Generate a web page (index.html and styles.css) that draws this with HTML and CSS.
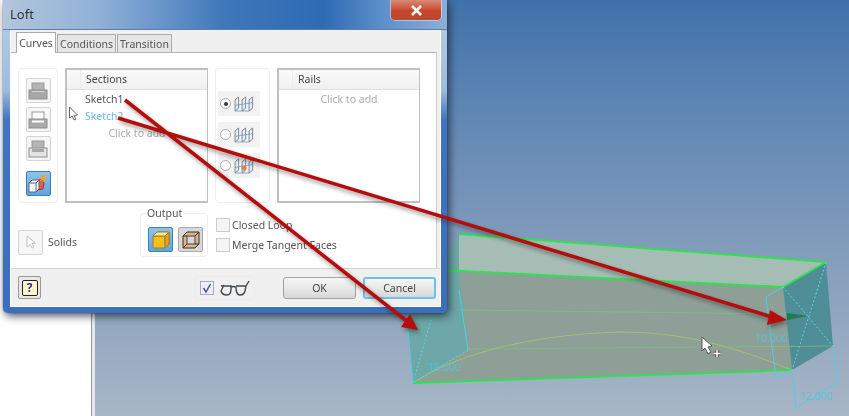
FILE: index.html
```html
<!DOCTYPE html>
<html lang="en">
<head>
    <meta charset="UTF-8">
    <title>Loft</title>
    <link rel="stylesheet" href="styles.css">
</head>
<body>
    <svg class="defs">
        <symbol id="frames" viewBox="0 0 30 24">
            <path d="M3 6 L8 2 L8 18 L3 22 Z M13 6 L18 2 L18 18 L13 22 Z M23 6 L28 2 L28 18 L23 22 Z" fill="#e8edf3" stroke="#55606e"/>
            <path d="M3 14 L28 10 M3 22 L23 22" stroke="#5b8fc8" fill="none"/>
        </symbol>
    </svg>

    <div class="scene">
        <div class="sidebar"></div>
        <div class="viewport"></div>

        <!-- the lofted solid -->
        <svg class="layer" viewBox="0 0 849 416">
            <polygon points="407,320 459,234 468,350 413,383" fill="#6ea7a8"/>
            <polygon points="459,234 826,262 783,287 459,271" fill="#a5bdb4"/>
            <polygon points="459,271 783,287 792,370 413,383 468,350" fill="#8e9f98"/>
            <polygon points="783,287 826,262 833,346 792,370" fill="#4f8e97"/>
            <path d="M460 310 L786 314 M468 349 L833 346" stroke="#7cc47c" opacity="0.7" fill="none"/>
            <path d="M413 383 C450 358 520 335 620 332 C680 332 730 345 792 370" stroke="#a5bf72" fill="none"/>
            <path d="M459 234 L826 262 M440 270 L783 287 L826 262 M413 383 L792 370" stroke="#2fe04f" stroke-width="2" fill="none"/>
            <path d="M783 287 L833 346 M826 262 L792 370 M413 383 L431 320 M468 350 L413 383" stroke="#5fd5e0" stroke-dasharray="2 2" fill="none"/>
            <path d="M407 320 L413 383 M468 350 L459 290 M766 297 L783 287 M766 297 L776 379 L792 370 M792 372 L796 408 M833 348 L838 382 M796 408 L838 382" stroke="#4fd0e0" fill="none"/>
            <polygon points="787,313 808,316 787,320" fill="#23794f"/>
            <text class="dim" x="428" y="371">18.000</text>
            <text class="dim" x="755" y="342">10.000</text>
            <text class="dim" x="800" y="400">12.000</text>
        </svg>

        <div class="dialog">
            <div class="titlebar">
                <span class="title">Loft</span>
                <div class="close">
                    <svg width="13" height="11" viewBox="0 0 13 11"><path d="M2 1 L11 10 M11 1 L2 10" stroke="#fff" stroke-width="2.6"/></svg>
                </div>
            </div>
            <div class="panel">
                <div class="tabs">
                    <div class="tab active">Curves</div>
                    <div class="tab">Conditions</div>
                    <div class="tab">Transition</div>
                </div>
                <div class="pane">
                    <div class="top-row">
                        <div class="tool-col">
                            <div class="btn">
                                <svg width="20" height="18" viewBox="0 0 20 18"><rect x="4" y="1" width="12" height="8" fill="#b4b4b4" stroke="#999"/><rect x="1" y="8" width="18" height="9" fill="#a8a8a8" stroke="#8e8e8e"/><path d="M4 9.5 H16" stroke="#d6d6d6"/></svg>
                            </div>
                            <div class="btn">
                                <svg width="20" height="18" viewBox="0 0 20 18"><rect x="4" y="1" width="12" height="8" fill="#fafafa" stroke="#999"/><rect x="1" y="8" width="18" height="9" fill="#aaa" stroke="#8e8e8e"/><path d="M4 10.5 H16" stroke="#fff" stroke-width="2"/></svg>
                            </div>
                            <div class="btn">
                                <svg width="20" height="18" viewBox="0 0 20 18"><rect x="4" y="1" width="12" height="8" fill="#b4b4b4" stroke="#999"/><rect x="1" y="8" width="18" height="9" fill="#e4e4e4" stroke="#8e8e8e"/><rect x="4" y="9" width="12" height="3" fill="#a8a8a8"/></svg>
                            </div>
                            <div class="btn on merge">
                                <svg width="20" height="20" viewBox="0 0 20 20">
                                    <path d="M8 7 L14 5 L16 9 L15 15 L9 16 Z" fill="#d9604f" stroke="#a33"/>
                                    <path d="M1 9 L4 6 L11 6 L11 15 L8 18 L1 18 Z" fill="#f6f8fb" stroke="#667"/>
                                    <path d="M1 9 H8 V18 M8 9 L11 6" stroke="#667" fill="none"/>
                                    <circle cx="15" cy="4" r="2.6" fill="#f2a22c"/>
                                    <path d="M15 0 V8 M11 4 H19 M12 1 L18 7 M18 1 L12 7" stroke="#f2a22c"/>
                                </svg>
                            </div>
                        </div>
                        <div class="list">
                            <div class="list-head"><span class="list-corner"></span><span>Sections</span></div>
                            <div class="item">Sketch1</div>
                            <div class="item current">Sketch2</div>
                            <div class="add">Click to add</div>
                        </div>
                        <div class="radio-col">
                            <div class="radio-row">
                                <span class="radio checked"></span>
                                <svg width="21" height="18"><use href="#frames"/></svg>
                            </div>
                            <div class="radio-row">
                                <span class="radio"></span>
                                <svg width="21" height="18"><use href="#frames"/></svg>
                            </div>
                            <div class="radio-row">
                                <span class="radio"></span>
                                <svg width="21" height="18"><use href="#frames"/><circle cx="11" cy="11" r="2.5" fill="#e2804a"/></svg>
                            </div>
                        </div>
                        <div class="list">
                            <div class="list-head"><span class="list-corner"></span><span>Rails</span></div>
                            <div class="add rails-add">Click to add</div>
                        </div>
                    </div>
                    <div class="bottom-row">
                        <div class="solids">
                            <div class="btn">
                                <svg width="12" height="14" viewBox="0 0 12 14"><path d="M2 1 V12 L5 9.5 L7 13 L9 12 L7 8.5 L10.500 8 Z" fill="#fff" stroke="#c2c2c2"/></svg>
                            </div>
                            <span>Solids</span>
                        </div>
                        <div class="output">
                            <span class="legend">Output</span>
                            <div class="output-btns">
                                <div class="btn on">
                                    <svg width="18" height="18" viewBox="0 0 18 18"><path d="M1 5 L5 1 H17 V13 L13 17 H1 Z" fill="#f2c21c" stroke="#a87a2a"/><path d="M1 5 H13 V17 M13 5 L17 1" fill="none" stroke="#a87a2a"/><path d="M1 5 L5 1 H17 L13 5 Z" fill="#fbe79a" stroke="#a87a2a"/><path d="M13 5 L17 1 V13 L13 17 Z" fill="#e0a21c" stroke="#a87a2a"/></svg>
                                </div>
                                <div class="btn pressed">
                                    <svg width="18" height="18" viewBox="0 0 18 18"><path d="M1 5 L5 1 H17 V13 L13 17 H1 Z" fill="#e3b186" stroke="#333"/><rect x="5" y="5" width="8" height="8" fill="#d6d6d6" stroke="#444"/><path d="M1 5 L5 5 M13 5 L17 1 M13 13 L17 13 M5 13 L1 17" stroke="#333"/></svg>
                                </div>
                            </div>
                        </div>
                        <div class="checks">
                            <label class="check"><span class="box"></span>Closed Loop</label>
                            <label class="check"><span class="box"></span>Merge Tangent Faces</label>
                        </div>
                    </div>
                </div>
                <div class="footer">
                    <div class="btn help"><span class="help-note">?</span></div>
                    <div class="preview">
                        <span class="box ticked">
                            <svg width="12" height="12" viewBox="0 0 12 12"><path d="M2.500 6 L5 10 L9.500 2" fill="none" stroke="#3f58b0" stroke-width="1.500"/></svg>
                        </span>
                        <svg width="30" height="16" viewBox="0 0 30 16"><path d="M4 5 L1 11 Q2 15 7 15 Q11 15 11 9 L11 6 H1 M11 7 Q13 6 16 7 M16 6 H26 L25 11 Q24 15 20 15 Q16 15 16 7 M26 6 L29 1" fill="none" stroke="#3f4a50" stroke-width="1.400"/></svg>
                    </div>
                    <div class="actions">
                        <div class="push">OK</div>
                        <div class="push focus">Cancel</div>
                    </div>
                </div>
            </div>
        </div>

        <!-- annotation arrows and mouse cursors drawn over the video -->
        <svg class="layer" viewBox="0 0 849 416">
            <g class="arrows">
                <path d="M125 100 L408 322 M118 118 L772 317" stroke="#b50c0c" stroke-width="3.500" fill="none"/>
                <polygon points="418,330 401,327 410,314" fill="#b50c0c"/>
                <polygon points="787,320 767,325 770,310" fill="#b50c0c"/>
            </g>
            <path d="M69.500 107 V118 L72 116 L74 120 L76 119 L74 115.500 L77.500 115 Z" fill="#fff" stroke="#666"/>
            <path d="M702 337 V351 L705 348 L708 354 L711 352 L708 347 L712 346 Z" fill="#fff" stroke="#555"/>
            <path d="M717 350 V357 M713.500 353.500 H720.500" stroke="#555" stroke-width="3.500"/>
            <path d="M717 350 V357 M713.500 353.500 H720.500" stroke="#fff" stroke-width="1.500"/>
        </svg>
    </div>
</body>
</html>
```

FILE: styles.css
```css
body {
    margin: 0;
    font-family: "Noto Sans", Arial, sans-serif;
    font-size: 10.5px;
    color: #555;
    overflow: hidden;
}
.defs {
    display: none;
}
.scene {
    position: relative;
    display: flex;
    width: 849px;
    height: 416px;
    overflow: hidden;
    filter: blur(0.45px);
}
.sidebar {
    width: 91px;
    background: #fff;
    border-right: 1px solid #999;
}
.viewport {
    flex: 1;
    border-left: 3px solid #e8e8e8;
    background: linear-gradient(#4071aa, #5a83b2 90px, #7f9aba 235px, #a8b6c6);
}
.layer {
    position: absolute;
    left: 0;
    top: 0;
    width: 849px;
    height: 416px;
}
.dim {
    font-size: 10.5px;
    fill: #4fc4dc;
    opacity: 0.85;
}
.arrows {
    filter: drop-shadow(2px 3px 2px rgba(30, 30, 30, 0.45));
}

/* dialog window */
.dialog {
    position: absolute;
    left: 3px;
    top: 0;
    width: 444px;
    height: 313px;
    box-sizing: border-box;
    padding: 0 6px 6px 7px;
    border-radius: 0 0 5px 5px;
    background: linear-gradient(#b9cee8, #9dbce0 90px, #3f74c0 120px, #3a6fc0);
    box-shadow: 0 0 1px #222, 2px 3px 9px rgba(20, 25, 40, 0.75);
}
.titlebar {
    display: flex;
    justify-content: space-between;
    height: 30px;
    margin: 0 -6px 0 -7px;
    padding: 0 6px 0 7px;
    background: linear-gradient(90deg, #b3c6dc, #8fb0d6 22%, #3f77ba 50%, #2e6bb2 72%, #5f90ca 86%, #8cafd8);
    border-bottom: 1px solid #5e7ea6;
    box-sizing: border-box;
}
.title {
    font-size: 13px;
    line-height: 28px;
    color: #333;
}
.close {
    display: flex;
    align-items: center;
    justify-content: center;
    width: 50px;
    height: 20px;
    border-radius: 0 0 4px 4px;
    background: linear-gradient(#d98a78, #c9452a 55%, #b9492f);
    box-shadow: 0 0 0 1px rgba(230, 235, 245, 0.5);
}
.panel {
    height: 277px;
    display: flex;
    flex-direction: column;
    background: #f0f0f0;
    border: 1px solid #fff;
    border-top: 0;
    box-sizing: border-box;
}
.tabs {
    display: flex;
    align-items: flex-end;
    height: 22px;
    padding-left: 5px;
    flex-shrink: 0;
}
.tab {
    height: 18px;
    line-height: 18px;
    padding: 0 2px;
    margin-right: 1px;
    background: #e6e6e6;
    border: 1px solid #aaa;
    border-bottom: 0;
    box-sizing: border-box;
}
.tab.active {
    height: 21px;
    line-height: 20px;
    background: #fff;
    width: 40px;
    text-align: center;
    margin-bottom: -1px;
    position: relative;
}
.pane {
    height: 216px;
    margin-right: 3px;
    background: #fff;
    border-top: 1px solid #b5b5b5;
    border-right: 1px solid #ccc;
    box-sizing: border-box;
    padding: 15px 0 0 7px;
}
.top-row {
    display: flex;
    gap: 7px;
    height: 135px;
}
.tool-col {
    width: 40px;
    box-sizing: border-box;
    display: flex;
    flex-direction: column;
    align-items: center;
    gap: 4px;
    padding-top: 9px;
    border: 1px solid #eee;
    border-radius: 4px;
}
.btn {
    display: flex;
    align-items: center;
    justify-content: center;
    width: 25px;
    height: 25px;
    box-sizing: border-box;
    border: 1px solid #d4d4d4;
    border-radius: 2px;
    background: #f6f6f6;
    flex-shrink: 0;
}
.btn.on {
    background: linear-gradient(#8cc4ee, #5ea6dc);
    border-color: #3f7fb2;
}
.btn.merge {
    margin-top: 6px;
}
.btn.pressed {
    background: #d8d8d8;
    border-color: #aaa;
}
.list {
    width: 143px;
    box-sizing: border-box;
    border: 2px solid #c0c0c0;
    border-right-width: 1px;
    background: #fff;
}
.list-head {
    display: flex;
    height: 19px;
    line-height: 19px;
    background: linear-gradient(#fafafa, #f0f0f0);
    border-bottom: 1px solid #e4e4e4;
    color: #444;
}
.list-corner {
    width: 13px;
    margin-right: 5px;
    border-right: 1px solid #ececec;
}
.item {
    height: 17px;
    line-height: 17px;
    padding-left: 18px;
}
.item:nth-child(2) {
    margin-top: 1px;
}
.item.current {
    color: #6cb6f0;
}
.add {
    height: 17px;
    line-height: 17px;
    text-align: center;
    color: #aaa;
}
.add.rails-add {
    margin-top: 1px;
}
.radio-col {
    width: 55px;
    box-sizing: border-box;
    display: flex;
    flex-direction: column;
    gap: 6px;
    padding: 22px 9px 0 2px;
    border: 1px solid #eee;
    border-radius: 4px;
}
.radio-row {
    display: flex;
    align-items: center;
    height: 25px;
    padding-left: 2px;
    background: #f2f2f2;
    gap: 2px;
}
.radio {
    width: 9px;
    height: 9px;
    border: 1px solid #aaa;
    border-radius: 50%;
    background: #fff;
    position: relative;
    flex-shrink: 0;
}
.radio.checked::after {
    content: "";
    position: absolute;
    left: 2.5px;
    top: 2.5px;
    width: 4px;
    height: 4px;
    border-radius: 50%;
    background: #333;
}
.bottom-row {
    display: flex;
    height: 44px;
    margin-top: 10px;
}
.solids {
    width: 122px;
    display: flex;
    align-items: center;
    gap: 5px;
    padding-top: 14px;
    box-sizing: border-box;
}
.output {
    width: 68px;
    box-sizing: border-box;
    border: 1px solid #eee;
    border-radius: 4px;
    padding: 0 6px 0 7px;
}
.legend {
    display: block;
    width: 36px;
    height: 13px;
    margin: -7px 0 0 -1px;
    line-height: 13px;
    font-size: 10.5px;
    background: #fff;
}
.output-btns {
    display: flex;
    gap: 5px;
    margin-top: 7px;
}
.checks {
    display: flex;
    flex-direction: column;
    gap: 6px;
    margin: 5px 0 0 8px;
}
.check {
    display: flex;
    align-items: center;
    gap: 2px;
    height: 14px;
}
.box {
    display: flex;
    align-items: center;
    justify-content: center;
    width: 14px;
    height: 14px;
    box-sizing: border-box;
    border: 1px solid #ccc;
    background: #f4f4f4;
}
.footer {
    display: flex;
    align-items: center;
    flex: 1;
    padding: 0 4px 0 7px;
    border-top: 1px solid #d4d4d4;
}
.help {
    width: 23px;
    height: 23px;
    border-color: #999;
    background: #e8e8e8;
}
.help-note {
    width: 14px;
    height: 14px;
    line-height: 14px;
    border: 1px solid #222;
    border-radius: 2px;
    background: #fdf8c8;
    color: #2a2a90;
    font-weight: bold;
    font-size: 12px;
    text-align: center;
}
.preview {
    display: flex;
    align-items: center;
    gap: 6px;
    margin-left: 154px;
    padding: 3px 4px;
    border: 1px solid #ececec;
    border-radius: 3px;
}
.box.ticked {
    border-color: #a8a8b8;
    background: #eef0f6;
}
.actions {
    display: flex;
    gap: 7px;
    margin-left: auto;
}
.push {
    width: 73px;
    height: 22px;
    line-height: 20px;
    box-sizing: border-box;
    text-align: center;
    border: 1px solid #a0a0a0;
    border-radius: 3px;
    background: linear-gradient(#f6f6f6, #e8e8e8 50%, #d8d8d8);
    color: #444;
}
.push.focus {
    border: 2px solid #6fc0e8;
    line-height: 18px;
}
```
